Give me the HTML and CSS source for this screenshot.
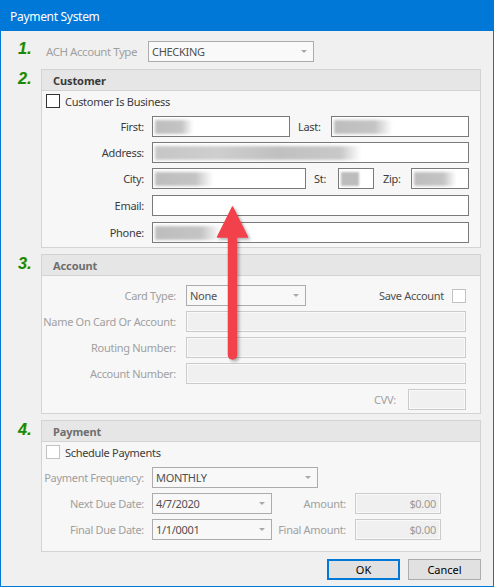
FILE: index.html
```html
<!DOCTYPE html>
<html>
<head>
<meta charset="utf-8">
<title>Payment System</title>
<link rel="stylesheet" href="styles.css">
</head>
<body>
<div class="window">
  <div class="titlebar">Payment System</div>
  <div class="content">
    <div class="ach-row">
      <span class="num num-ach">1.</span>
      <span class="ach-label">ACH Account Type</span>
      <div class="combo combo-ach">CHECKING<span class="caret"></span></div>
    </div>

    <div class="section first-section">
      <span class="num">2.</span>
      <div class="group">
        <div class="group-head head-active">Customer</div>
        <div class="group-body cust-body">
          <div class="check-row">
            <span class="checkbox checkbox-on"></span>
            <span class="check-label">Customer Is Business</span>
          </div>
          <div class="form-row">
            <span class="lbl lbl-cust">First:</span>
            <div class="input w138"><span class="blur b-first"></span></div>
            <span class="lbl-inline lbl-last">Last:</span>
            <div class="input w138"><span class="blur b-last"></span></div>
          </div>
          <div class="form-row gap5">
            <span class="lbl lbl-cust">Address:</span>
            <div class="input w317"><span class="blur b-address"></span></div>
          </div>
          <div class="form-row gap5">
            <span class="lbl lbl-cust">City:</span>
            <div class="input w154"><span class="blur b-city"></span></div>
            <span class="lbl-inline lbl-st">St:</span>
            <div class="input w36"><span class="blur b-st"></span></div>
            <span class="lbl-inline lbl-zip">Zip:</span>
            <div class="input w58"><span class="blur b-zip"></span></div>
          </div>
          <div class="form-row gap6">
            <span class="lbl lbl-cust">Email:</span>
            <div class="input w317"></div>
          </div>
          <div class="form-row gap6">
            <span class="lbl lbl-cust">Phone:</span>
            <div class="input w317"><span class="blur b-phone"></span></div>
          </div>
        </div>
      </div>
    </div>

    <div class="section">
      <span class="num">3.</span>
      <div class="group">
        <div class="group-head head-disabled">Account</div>
        <div class="group-body acct-body">
          <div class="form-row">
            <span class="lbl lbl-acct">Card Type:</span>
            <div class="combo w120">None<span class="caret"></span></div>
            <span class="save-label">Save Account</span>
            <span class="checkbox checkbox-off save-box"></span>
          </div>
          <div class="form-row gap5">
            <span class="lbl lbl-acct">Name On Card Or Account:</span>
            <div class="dis-input w280"></div>
          </div>
          <div class="form-row gap5">
            <span class="lbl lbl-acct">Routing Number:</span>
            <div class="dis-input w280"></div>
          </div>
          <div class="form-row gap5">
            <span class="lbl lbl-acct">Account Number:</span>
            <div class="dis-input w280"></div>
          </div>
          <div class="form-row gap5 row-end">
            <span class="lbl-cvv">CVV:</span>
            <div class="dis-input w58 cvv-input"></div>
          </div>
        </div>
      </div>
    </div>

    <div class="section">
      <span class="num">4.</span>
      <div class="group">
        <div class="group-head head-disabled">Payment</div>
        <div class="group-body pay-body">
          <div class="check-row">
            <span class="checkbox checkbox-off"></span>
            <span class="check-label">Schedule Payments</span>
          </div>
          <div class="form-row">
            <span class="lbl lbl-pay">Payment Frequency:</span>
            <div class="combo w166">MONTHLY<span class="caret"></span></div>
          </div>
          <div class="form-row gap5">
            <span class="lbl lbl-pay">Next Due Date:</span>
            <div class="combo w120">4/7/2020<span class="caret"></span></div>
            <span class="lbl-amount">Amount:</span>
            <div class="dis-input w86 amount">$0.00</div>
          </div>
          <div class="form-row gap5">
            <span class="lbl lbl-pay">Final Due Date:</span>
            <div class="combo w120">1/1/0001<span class="caret"></span></div>
            <span class="lbl-amount">Final Amount:</span>
            <div class="dis-input w86 amount">$0.00</div>
          </div>
        </div>
      </div>
    </div>

    <div class="buttons">
      <button class="btn btn-default">OK</button>
      <button class="btn">Cancel</button>
    </div>
  </div>

  <svg class="arrow" width="70" height="175" viewBox="0 0 70 175" xmlns="http://www.w3.org/2000/svg">
    <line x1="32.5" y1="38" x2="32.5" y2="160" stroke="#f2414a" stroke-width="9.5" stroke-linecap="round"/>
    <polygon points="32.5,12 47.5,42 17.5,42" fill="#f2414a" stroke="#f2414a" stroke-width="1.5" stroke-linejoin="round"/>
  </svg>
</div>
</body>
</html>
```

FILE: styles.css
```css
* {
  box-sizing: border-box;
}

html, body {
  margin: 0;
  padding: 0;
}

body {
  font-family: "Noto Sans", "Open Sans", sans-serif;
  font-size: 11px;
  letter-spacing: -0.3px;
  color: #3c3c3c;
  background: #f0f0f0;
}

.window {
  position: relative;
  width: 494px;
  height: 587px;
  border: 1px solid #0078d7;
  background: #f0f0f0;
  overflow: hidden;
}

.titlebar {
  height: 30px;
  background: #0078d7;
  color: #ffffff;
  font-size: 12px;
  padding-left: 9px;
  display: flex;
  align-items: center;
}

.content {
  padding-top: 10px;
}

.num {
  flex: none;
  width: 40px;
  padding-left: 17px;
  font-family: "Liberation Sans", Arial, sans-serif;
  font-style: italic;
  font-weight: bold;
  font-size: 16px;
  line-height: 20px;
  letter-spacing: 0;
  color: #128a12;
  text-shadow: 1px 0 0 rgba(214, 208, 40, 0.55);
}

.num-ach {
  align-self: flex-start;
  margin-top: -2px;
}

.ach-row {
  display: flex;
  align-items: center;
  height: 21px;
}

.ach-label {
  flex: none;
  width: 107px;
  padding-left: 5px;
  color: #a0a0a0;
  font-size: 11.5px;
  letter-spacing: -0.45px;
  white-space: nowrap;
}

.combo {
  position: relative;
  flex: none;
  height: 21px;
  border: 1px solid #acacac;
  background: #f8f8f8;
  color: #505050;
  display: flex;
  align-items: center;
  padding-left: 3px;
}

.combo-ach {
  width: 166px;
  background: #f9f9f9;
}

.caret {
  position: absolute;
  right: 6px;
  top: 8px;
  width: 0;
  height: 0;
  border-left: 3px solid transparent;
  border-right: 3px solid transparent;
  border-top: 3px solid #a8a8a8;
}

.section {
  display: flex;
  margin-top: 6px;
}

.first-section {
  margin-top: 7px;
}

.group {
  width: 440px;
  border: 1px solid #d3d3d3;
  background: #f7f7f7;
}

.group-head {
  height: 21px;
  background: #e6e6e6;
  border-bottom: 1px solid #d3d3d3;
  font-weight: bold;
  letter-spacing: -0.1px;
  padding-left: 11px;
  display: flex;
  align-items: center;
}

.head-active {
  color: #3a3a3a;
}

.head-disabled {
  color: #6e6e6e;
}

.cust-body {
  padding: 3px 0 4px 0;
}

.acct-body {
  padding: 9px 0 3px 0;
}

.pay-body {
  padding: 3px 0 11px 0;
}

.check-row {
  display: flex;
  align-items: center;
  height: 14px;
  padding-left: 4px;
  margin-bottom: 8px;
}

.checkbox {
  flex: none;
  width: 14px;
  height: 14px;
  background: #ffffff;
}

.checkbox-on {
  border: 1px solid #333333;
}

.checkbox-off {
  border: 1px solid #c2c2c2;
}

.check-label {
  margin-left: 5px;
  color: #3c3c3c;
}

.form-row {
  display: flex;
  align-items: center;
  height: 21px;
}

.gap5 {
  margin-top: 5px;
}

.gap6 {
  margin-top: 6px;
}

.lbl {
  flex: none;
  text-align: right;
  white-space: nowrap;
}

.lbl-cust {
  width: 102px;
  margin-right: 8px;
}

.lbl-acct {
  width: 134px;
  margin-right: 10px;
  color: #a0a0a0;
}

.lbl-pay {
  width: 102px;
  margin-right: 8px;
  color: #a0a0a0;
}

.lbl-inline {
  flex: none;
  white-space: nowrap;
}

.lbl-last {
  width: 33px;
  margin-left: 8px;
}

.lbl-st {
  width: 24px;
  margin-left: 8px;
}

.lbl-zip {
  width: 28px;
  margin-left: 9px;
}

.input {
  flex: none;
  height: 21px;
  border: 1px solid #7a7a7a;
  background: #ffffff;
  display: flex;
  align-items: center;
  padding-left: 2px;
  overflow: hidden;
}

.dis-input {
  flex: none;
  height: 21px;
  border: 1px solid #cbcbcb;
  background: #f0f0f0;
  box-shadow: inset 0 0 0 1px #f9f9f9;
  display: flex;
  align-items: center;
  color: #9a9a9a;
}

.w36 { width: 36px; }
.w58 { width: 58px; }
.w86 { width: 86px; }
.w120 { width: 120px; }
.w138 { width: 138px; }
.w154 { width: 154px; }
.w166 { width: 166px; }
.w280 { width: 280px; }
.w317 { width: 317px; }

.blur {
  display: block;
  height: 14px;
  filter: blur(1.6px);
  background: linear-gradient(90deg, #bdbdbd 0%, #c4c4c4 70%, rgba(200, 200, 200, 0) 100%);
}

.b-first { width: 38px; }
.b-last { width: 58px; }
.b-address { width: 206px; background: linear-gradient(90deg, #c6c6c6, #cecece 30%, #c0c0c0 60%, #c8c8c8 90%, rgba(200, 200, 200, 0)); }
.b-city { width: 58px; }
.b-st { width: 18px; background: #bdbdbd; filter: blur(0.8px); }
.b-zip { width: 42px; }
.b-phone { width: 66px; }

.save-label {
  margin-left: auto;
  color: #505050;
}

.save-box {
  margin-left: 8px;
  margin-right: 14px;
}

.row-end {
  justify-content: flex-end;
}

.lbl-cvv {
  color: #a0a0a0;
  margin-right: 12px;
}

.cvv-input {
  margin-right: 14px;
}

.lbl-amount {
  flex: 1;
  text-align: right;
  padding-right: 9px;
  color: #a0a0a0;
  white-space: nowrap;
}

.amount {
  justify-content: flex-end;
  padding-right: 4px;
  margin-right: 39px;
}

.buttons {
  display: flex;
  justify-content: flex-end;
  gap: 8px;
  margin-top: 7px;
  padding-right: 12px;
}

.btn {
  width: 73px;
  height: 21px;
  margin: 0;
  padding: 0;
  border: 1px solid #adadad;
  background: #e1e1e1;
  color: #000000;
  font-family: "Noto Sans", "Open Sans", sans-serif;
  font-size: 11px;
}

.btn-default {
  border: 2px solid #0078d7;
}

.arrow {
  position: absolute;
  left: 199px;
  top: 194px;
  filter: drop-shadow(2px 2px 1.5px rgba(0, 0, 0, 0.3));
}
```
